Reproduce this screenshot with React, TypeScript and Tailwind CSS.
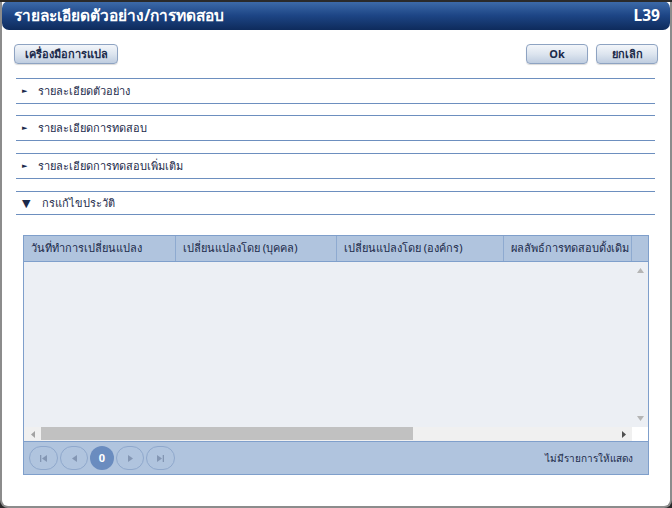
import React from "react";

const font = { fontFamily: "Tahoma, 'Noto Sans', 'DejaVu Sans', sans-serif" };

function Section({ title, cls }: { title: string; cls: string }) {
  return (
    <div className={`${cls} border-t border-b border-[#6d8fbf] h-[26px] flex items-center text-[11px] text-[#1b2a4a]`}>
      <span className="ml-[6px] w-[16px] text-[7px] text-[#1b2a4a]">►</span>
      <span>{title}</span>
    </div>
  );
}

function Btn({ children, w }: { children: React.ReactNode; w: string }) {
  return (
    <div
      className={`${w} h-[20px] rounded-[4px] border border-[#8ea3c2] bg-gradient-to-b from-[#f3f6fa] via-[#dde5ef] to-[#bfcde0] flex items-center justify-center text-[11px] font-bold text-[#1b2a4a] shadow-[0_1px_1px_rgba(0,0,0,0.15)]`}
    >
      {children}
    </div>
  );
}

function PagerBtn({ children, active, w }: { children: React.ReactNode; active?: boolean; w: string }) {
  return (
    <div
      className={`${w} h-[24px] rounded-full flex items-center justify-center text-[11px] ${
        active ? "bg-[#6a8cbf] text-white font-bold" : "border border-[#8fa8cc] text-[#8396b3]"
      }`}
    >
      {children}
    </div>
  );
}

export default function App() {
  return (
    <div style={font} className="w-[672px] h-[508px] bg-[#2a2a2a] overflow-hidden">
      <div className="w-[672px] h-[508px] bg-white rounded-b-[8px] border-x-2 border-b-2 border-[#8c8c8c] flex flex-col relative">
        <div className="absolute -left-[2px] -right-[2px] top-0 h-[2px] bg-[#2a2a2a]" />
        <div className="mt-[1px] h-[29px] rounded-[7px] bg-gradient-to-b from-[#3f6dab] via-[#1d4585] to-[#0e2b5c] flex items-center justify-between pl-[12px] pr-[10px] text-white font-bold text-[15.5px] mx-0">
          <span>รายละเอียดตัวอย่าง/การทดสอบ</span>
          <span>L39</span>
        </div>
        <div className="flex justify-between items-center mt-[14px] pl-[12px] pr-[12px]">
          <Btn w="w-[104px]">เครื่องมือการแปล</Btn>
          <div className="flex gap-[8px]">
            <Btn w="w-[62px]">Ok</Btn>
            <Btn w="w-[62px]">ยกเลิก</Btn>
          </div>
        </div>
        <div className="ml-[14px] mr-[15px] mt-[14px] flex flex-col">
          <Section cls="" title="รายละเอียดตัวอย่าง" />
          <Section cls="mt-[11px]" title="รายละเอียดการทดสอบ" />
          <Section cls="mt-[12px]" title="รายละเอียดการทดสอบเพิ่มเติม" />
          <div className="mt-[12px] border-t border-b border-[#6d8fbf] h-[24px] flex items-center text-[11px] text-[#1b2a4a]">
            <span className="ml-[6px] w-[20px] text-[11px]">▼</span>
            <span>กรแก้ไขประวัติ</span>
          </div>
        </div>
        <div className="ml-[21px] mr-[21px] mt-[20px] h-[240px] border border-[#7f9fcb] flex flex-col">
          <div className="h-[26px] bg-[#b0c4de] border-b border-[#7f9fcb] flex text-[11px] text-[#1b2a4a]">
            <div className="w-[152px] border-r border-[#8eaad0] pl-[7px] flex items-center">วันที่ทำการเปลี่ยนแปลง</div>
            <div className="w-[161px] border-r border-[#8eaad0] pl-[7px] flex items-center">เปลี่ยนแปลงโดย (บุคคล)</div>
            <div className="w-[167px] border-r border-[#8eaad0] pl-[7px] flex items-center">เปลี่ยนแปลงโดย (องค์กร)</div>
            <div className="w-[128px] border-r border-[#8eaad0] pl-[7px] flex items-center overflow-hidden whitespace-nowrap">ผลลัพธ์การทดสอบดั้งเดิม</div>
            <div className="flex-1" />
          </div>
          <div className="flex-1 flex bg-[#eceff4]">
            <div className="flex-1" />
            <div className="w-[16px] flex flex-col items-center justify-between py-[6px]">
              <svg width="7" height="5" viewBox="0 0 7 5"><path d="M0 5 L3.5 0 L7 5Z" fill="#b5b5b5" /></svg>
              <svg width="7" height="5" viewBox="0 0 7 5"><path d="M0 0 L3.5 5 L7 0Z" fill="#b5b5b5" /></svg>
            </div>
          </div>
          <div className="h-[14px] flex bg-[#f0f0f0]">
            <div className="w-[17px] flex items-center justify-center">
              <svg width="4" height="7" viewBox="0 0 4 7"><path d="M4 0 L0 3.5 L4 7Z" fill="#a3a3a3" /></svg>
            </div>
            <div className="w-[372px] h-[13px] bg-[#c1c1c1]" />
            <div className="flex-1 flex items-center justify-end pr-[6px]">
              <svg width="4" height="7" viewBox="0 0 4 7"><path d="M0 0 L4 3.5 L0 7Z" fill="#505050" /></svg>
            </div>
            <div className="w-[16px] bg-white" />
          </div>
          <div className="h-[33px] bg-[#b0c4de] border-t border-[#7f9fcb] flex items-center px-[5px] justify-between">
            <div className="flex items-center gap-[2px]">
              <PagerBtn w="w-[29px]">
                <svg width="7" height="7" viewBox="0 0 7 7"><rect x="0" y="0" width="1.3" height="7" fill="#8396b3" /><path d="M7 0 L2 3.5 L7 7Z" fill="#8396b3" /></svg>
              </PagerBtn>
              <PagerBtn w="w-[28px]">
                <svg width="5" height="7" viewBox="0 0 5 7"><path d="M5 0 L0 3.5 L5 7Z" fill="#8396b3" /></svg>
              </PagerBtn>
              <PagerBtn w="w-[24px]" active>0</PagerBtn>
              <PagerBtn w="w-[28px]">
                <svg width="5" height="7" viewBox="0 0 5 7"><path d="M0 0 L5 3.5 L0 7Z" fill="#8396b3" /></svg>
              </PagerBtn>
              <PagerBtn w="w-[29px]">
                <svg width="7" height="7" viewBox="0 0 7 7"><path d="M0 0 L5 3.5 L0 7Z" fill="#8396b3" /><rect x="5.7" y="0" width="1.3" height="7" fill="#8396b3" /></svg>
              </PagerBtn>
            </div>
            <span className="text-[10px] text-[#1b2a4a] mr-[10px]">ไม่มีรายการให้แสดง</span>
          </div>
        </div>
      </div>
    </div>
  );
}
